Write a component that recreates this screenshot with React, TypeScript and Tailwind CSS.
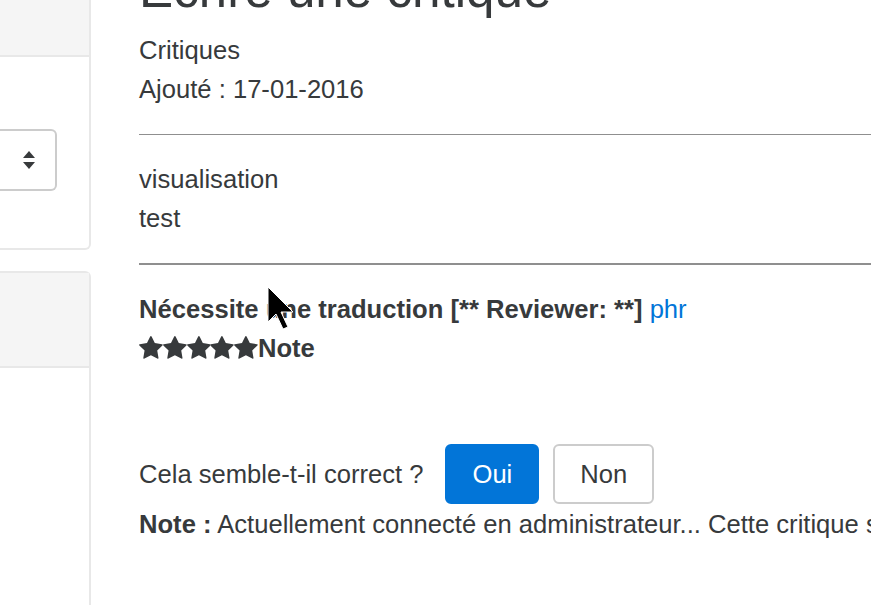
import React from "react";

const StarIcon = () => (
    <svg viewBox="0 0 1664 1587" className="inline-block h-[22.7px] w-[23.8px] fill-[#373a3c] align-[-2px]">
        <path d="M1664 615q0 22-26 48l-363 354 86 500q1 7 1 20 0 21-10.5 35.5t-30.5 14.5q-19 0-40-12l-449-236-449 236q-22 12-40 12-21 0-31.5-14.5t-10.5-35.5q0-6 2-20l86-500-364-354q-25-27-25-48 0-37 56-46l502-73 225-455q19-41 49-41t49 41l225 455 502 73q56 9 56 46z" />
    </svg>
);

const SelectArrows = () => (
    <svg viewBox="0 0 14 19" className="h-[19px] w-[14px] fill-[#373a3c]">
        <path d="M7 0 L13 7 L1 7 Z" />
        <path d="M1 11 L13 11 L7 18 Z" />
    </svg>
);

const Cursor = () => (
    <svg viewBox="0 0 27 44" className="absolute left-[267px] top-[286px] h-[44px] w-[27px]">
        <path d="M1 1 L1 36 L9 28 L16 43 L21 41 L14 26 L26 26 Z" fill="#000" stroke="#fff" strokeWidth="1" />
    </svg>
);

export default function App() {
    return (
        <div className="relative h-[605px] w-[871px] overflow-hidden bg-white text-[25.6px] leading-[38.4px] text-[#373a3c] font-['Liberation_Sans',Arial,sans-serif]">
            <div className="-mt-[38px] flex">
                {/* sidebar, cut off on the left */}
                <aside className="w-[91px] shrink-0">
                    <div className="rounded-r-[6px] border-2 border-l-0 border-[#e8e8e8]">
                        <div className="h-[93px] border-b-2 border-[#e8e8e8] bg-[#f5f5f5]" />
                        <div className="pt-[72px] pb-[57px] pr-[32px]">
                            <div className="flex h-[62px] items-center justify-end rounded-r-[6px] border-2 border-l-0 border-[#cccccc] pr-[19px]">
                                <SelectArrows />
                            </div>
                        </div>
                    </div>
                    <div className="mt-[21px] h-[400px] rounded-tr-[6px] border-2 border-l-0 border-b-0 border-[#e8e8e8]">
                        <div className="h-[95px] border-b-2 border-[#e8e8e8] bg-[#f5f5f5]" />
                    </div>
                </aside>

                {/* main column */}
                <main className="ml-[48px] w-[900px] shrink-0">
                    <h1 className="mb-[12.8px] text-[51.2px] leading-[56.3px] font-medium whitespace-nowrap">Écrire une critique</h1>
                    <div>Critiques</div>
                    <div>Ajouté : 17-01-2016</div>

                    <hr className="my-[25.6px] border-t border-[#8f8f8f]" />

                    <div>visualisation</div>
                    <div>test</div>

                    <hr className="my-[25.6px] border-t-2 border-[#8f8f8f]" />

                    <div className="whitespace-nowrap">
                        <b>Nécessite une traduction [** Reviewer: **]</b>{" "}
                        <a className="text-[#0275d8]">phr</a>
                    </div>
                    <div className="flex items-center font-bold">
                        <StarIcon />
                        <StarIcon />
                        <StarIcon />
                        <StarIcon />
                        <StarIcon />
                        <span>Note</span>
                    </div>

                    <div className="mt-[77px] flex items-center whitespace-nowrap">
                        <span>Cela semble-t-il correct ?</span>
                        <button className="ml-[22px] rounded-[6px] border-2 border-[#0275d8] bg-[#0275d8] px-[25px] py-[9px] text-white">Oui</button>
                        <button className="ml-[14px] rounded-[6px] border-2 border-[#cccccc] bg-white px-[25px] py-[9px] text-[#373a3c]">Non</button>
                    </div>
                    <div className="mt-[1px] whitespace-nowrap">
                        <b>Note :</b> Actuellement connecté en administrateur... Cette critique sera publiée directement.
                    </div>
                </main>
            </div>
            <Cursor />
        </div>
    );
}
